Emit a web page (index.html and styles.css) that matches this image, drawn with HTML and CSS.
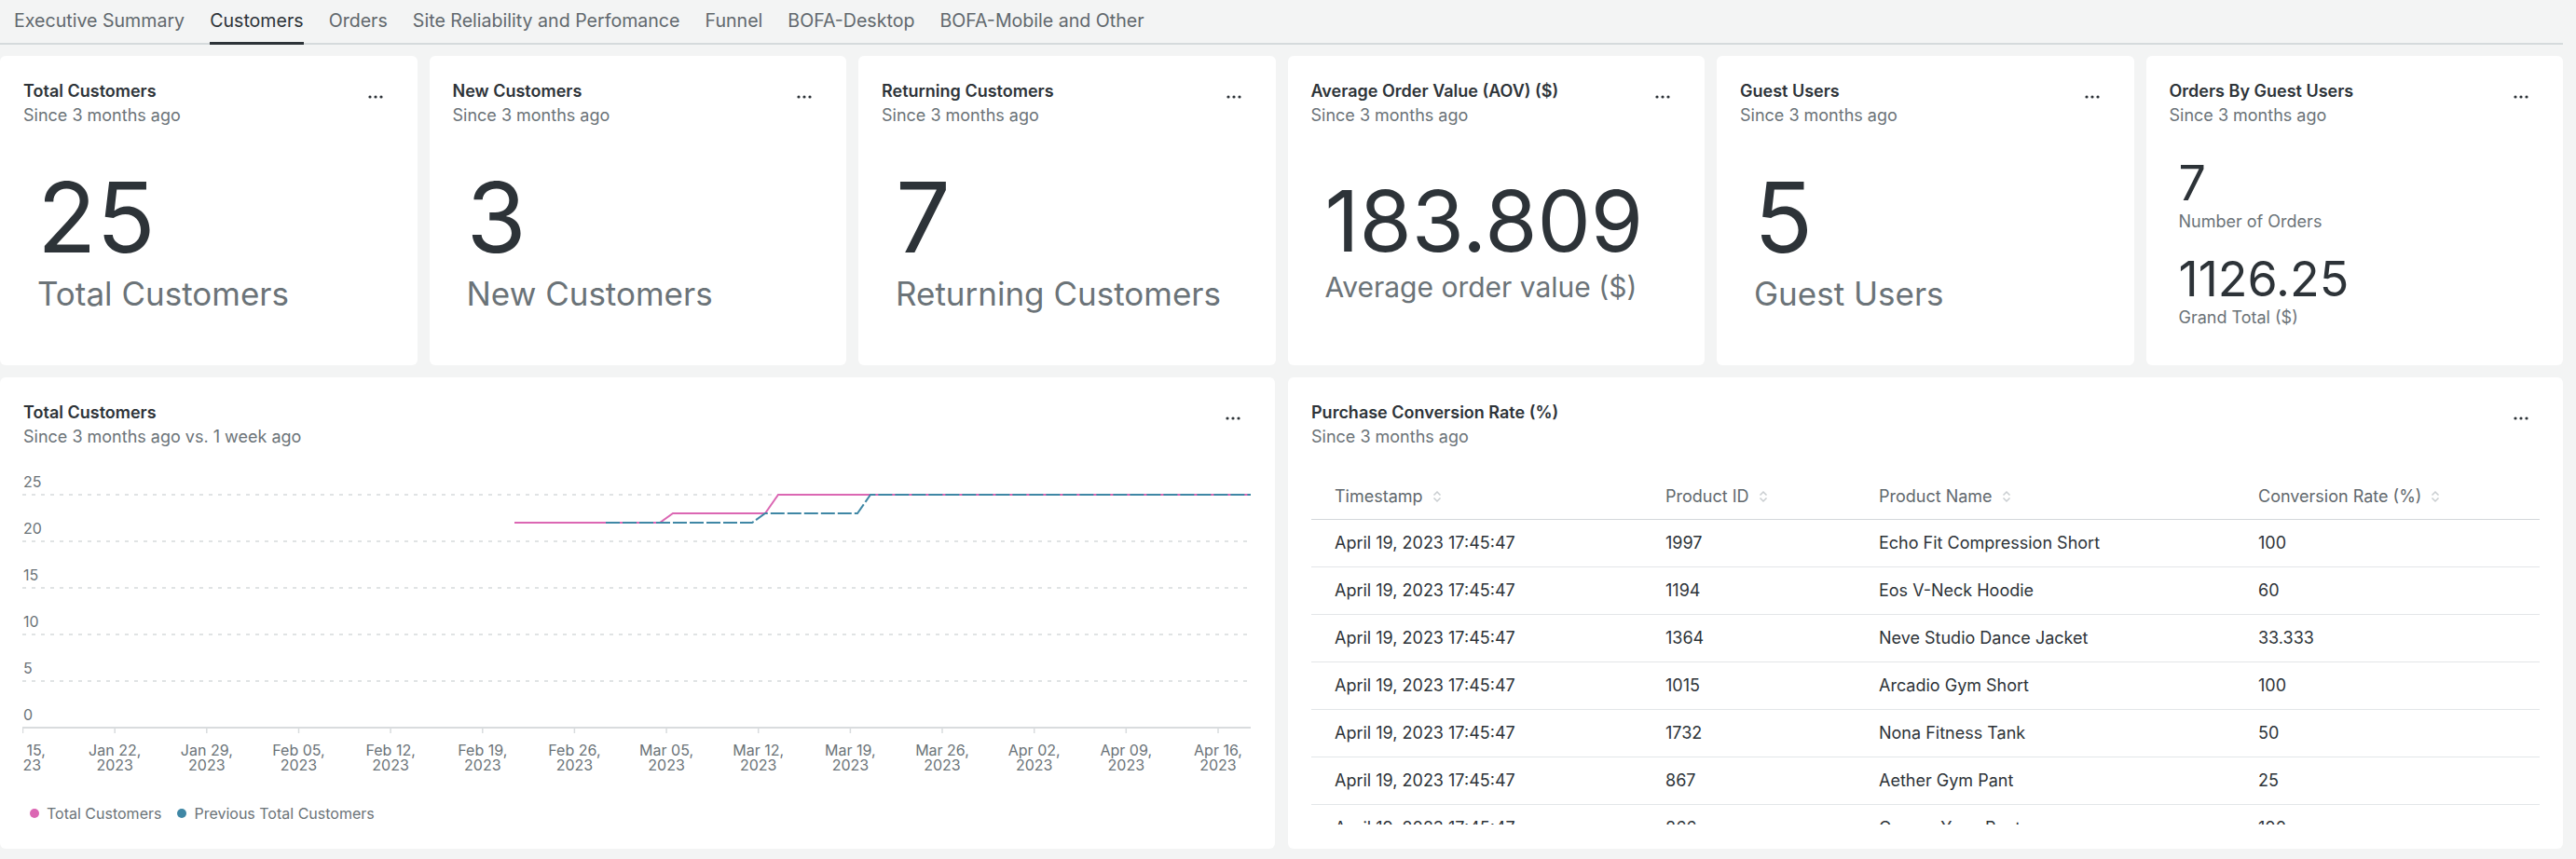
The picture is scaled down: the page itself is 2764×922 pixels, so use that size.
FILE: index.html
```html
<!DOCTYPE html>
<html lang="en">
<head>
<meta charset="utf-8">
<title>Customers</title>
<link rel="stylesheet" href="styles.css">
</head>
<body>
<div class="page">
  <nav class="tabs">
    <div class="tab">Executive Summary</div>
    <div class="tab active">Customers</div>
    <div class="tab">Orders</div>
    <div class="tab">Site Reliability and Perfomance</div>
    <div class="tab">Funnel</div>
    <div class="tab">BOFA-Desktop</div>
    <div class="tab">BOFA-Mobile and Other</div>
  </nav>

  <section class="row-top">
    <div class="card stat">
      <div class="card-head">
        <div><div class="card-title">Total Customers</div><div class="card-sub">Since 3 months ago</div></div>
        <svg class="more" width="16" height="4" viewBox="0 0 16 4"><circle cx="2" cy="2" r="1.6"/><circle cx="8" cy="2" r="1.6"/><circle cx="14" cy="2" r="1.6"/></svg>
      </div>
      <div class="stat-body"><div class="stat-value">25</div><div class="stat-label">Total Customers</div></div>
    </div>
    <div class="card stat">
      <div class="card-head">
        <div><div class="card-title">New Customers</div><div class="card-sub">Since 3 months ago</div></div>
        <svg class="more" width="16" height="4" viewBox="0 0 16 4"><circle cx="2" cy="2" r="1.6"/><circle cx="8" cy="2" r="1.6"/><circle cx="14" cy="2" r="1.6"/></svg>
      </div>
      <div class="stat-body"><div class="stat-value">3</div><div class="stat-label">New Customers</div></div>
    </div>
    <div class="card stat">
      <div class="card-head">
        <div><div class="card-title">Returning Customers</div><div class="card-sub">Since 3 months ago</div></div>
        <svg class="more" width="16" height="4" viewBox="0 0 16 4"><circle cx="2" cy="2" r="1.6"/><circle cx="8" cy="2" r="1.6"/><circle cx="14" cy="2" r="1.6"/></svg>
      </div>
      <div class="stat-body"><div class="stat-value">7</div><div class="stat-label">Returning Customers</div></div>
    </div>
    <div class="card stat">
      <div class="card-head">
        <div><div class="card-title">Average Order Value (AOV) ($)</div><div class="card-sub">Since 3 months ago</div></div>
        <svg class="more" width="16" height="4" viewBox="0 0 16 4"><circle cx="2" cy="2" r="1.6"/><circle cx="8" cy="2" r="1.6"/><circle cx="14" cy="2" r="1.6"/></svg>
      </div>
      <div class="stat-body"><div class="stat-value small">183.809</div><div class="stat-label small">Average order value ($)</div></div>
    </div>
    <div class="card stat">
      <div class="card-head">
        <div><div class="card-title">Guest Users</div><div class="card-sub">Since 3 months ago</div></div>
        <svg class="more" width="16" height="4" viewBox="0 0 16 4"><circle cx="2" cy="2" r="1.6"/><circle cx="8" cy="2" r="1.6"/><circle cx="14" cy="2" r="1.6"/></svg>
      </div>
      <div class="stat-body"><div class="stat-value">5</div><div class="stat-label">Guest Users</div></div>
    </div>
    <div class="card stat">
      <div class="card-head">
        <div><div class="card-title">Orders By Guest Users</div><div class="card-sub">Since 3 months ago</div></div>
        <svg class="more" width="16" height="4" viewBox="0 0 16 4"><circle cx="2" cy="2" r="1.6"/><circle cx="8" cy="2" r="1.6"/><circle cx="14" cy="2" r="1.6"/></svg>
      </div>
      <div class="stat-body multi">
        <div class="mini-value">7</div><div class="mini-label">Number of Orders</div>
        <div class="mini-value second">1126.25</div><div class="mini-label">Grand Total ($)</div>
      </div>
    </div>
  </section>

  <section class="row-bottom">
    <div class="card panel">
      <div class="card-head">
        <div><div class="card-title">Total Customers</div><div class="card-sub">Since 3 months ago vs. 1 week ago</div></div>
        <svg class="more" width="16" height="4" viewBox="0 0 16 4"><circle cx="2" cy="2" r="1.6"/><circle cx="8" cy="2" r="1.6"/><circle cx="14" cy="2" r="1.6"/></svg>
      </div>
      <svg class="chart" width="1318" height="335" viewBox="0 0 1318 335">
        <g class="grid">
          <line x1="0" y1="31" x2="1318" y2="31"/>
          <line x1="0" y1="81" x2="1318" y2="81"/>
          <line x1="0" y1="131" x2="1318" y2="131"/>
          <line x1="0" y1="181" x2="1318" y2="181"/>
          <line x1="0" y1="231" x2="1318" y2="231"/>
        </g>
        <g class="ylab">
          <text x="1" y="22.5">25</text>
          <text x="1" y="72.5">20</text>
          <text x="1" y="122.5">15</text>
          <text x="1" y="172.5">10</text>
          <text x="1" y="222.5">5</text>
          <text x="1" y="272.5">0</text>
        </g>
        <line class="axis" x1="0" y1="281" x2="1318" y2="281"/>
        <g class="ticks">
          <line x1="0.5" y1="282" x2="0.5" y2="287"/>
          <line x1="99.2" y1="282" x2="99.2" y2="287"/>
          <line x1="197.8" y1="282" x2="197.8" y2="287"/>
          <line x1="296.5" y1="282" x2="296.5" y2="287"/>
          <line x1="395.1" y1="282" x2="395.1" y2="287"/>
          <line x1="493.8" y1="282" x2="493.8" y2="287"/>
          <line x1="592.4" y1="282" x2="592.4" y2="287"/>
          <line x1="691.1" y1="282" x2="691.1" y2="287"/>
          <line x1="789.7" y1="282" x2="789.7" y2="287"/>
          <line x1="888.4" y1="282" x2="888.4" y2="287"/>
          <line x1="987" y1="282" x2="987" y2="287"/>
          <line x1="1085.7" y1="282" x2="1085.7" y2="287"/>
          <line x1="1184.3" y1="282" x2="1184.3" y2="287"/>
          <line x1="1283" y1="282" x2="1283" y2="287"/>
        </g>
        <g class="xlab">
          <text class="edge" x="4.5" y="311">15,</text><text class="edge" x="0.5" y="327">23</text>
          <text x="99.2" y="311">Jan 22,</text><text x="99.2" y="327">2023</text>
          <text x="197.8" y="311">Jan 29,</text><text x="197.8" y="327">2023</text>
          <text x="296.5" y="311">Feb 05,</text><text x="296.5" y="327">2023</text>
          <text x="395.1" y="311">Feb 12,</text><text x="395.1" y="327">2023</text>
          <text x="493.8" y="311">Feb 19,</text><text x="493.8" y="327">2023</text>
          <text x="592.4" y="311">Feb 26,</text><text x="592.4" y="327">2023</text>
          <text x="691.1" y="311">Mar 05,</text><text x="691.1" y="327">2023</text>
          <text x="789.7" y="311">Mar 12,</text><text x="789.7" y="327">2023</text>
          <text x="888.4" y="311">Mar 19,</text><text x="888.4" y="327">2023</text>
          <text x="987" y="311">Mar 26,</text><text x="987" y="327">2023</text>
          <text x="1085.7" y="311">Apr 02,</text><text x="1085.7" y="327">2023</text>
          <text x="1184.3" y="311">Apr 09,</text><text x="1184.3" y="327">2023</text>
          <text x="1283" y="311">Apr 16,</text><text x="1283" y="327">2023</text>
        </g>
        <path class="line-current" d="M528 61 H684 L698 51 H797 L811 31 H1318"/>
        <path class="line-previous" d="M626 61 H783 L797 51 H896 L910 31 H1318"/>
      </svg>
      <div class="legend">
        <div class="legend-item"><span class="swatch pink"></span>Total Customers</div>
        <div class="legend-item"><span class="swatch blue"></span>Previous Total Customers</div>
      </div>
    </div>

    <div class="card panel">
      <div class="card-head">
        <div><div class="card-title">Purchase Conversion Rate (%)</div><div class="card-sub">Since 3 months ago</div></div>
        <svg class="more" width="16" height="4" viewBox="0 0 16 4"><circle cx="2" cy="2" r="1.6"/><circle cx="8" cy="2" r="1.6"/><circle cx="14" cy="2" r="1.6"/></svg>
      </div>
      <div class="table-wrap">
        <table class="data">
          <colgroup><col class="c1"><col class="c2"><col class="c3"><col class="c4"></colgroup>
          <thead>
            <tr>
              <th>Timestamp<svg class="sort" width="10" height="16" viewBox="0 0 10 16"><path d="M1.5 6.5 L5 3 L8.5 6.5 M1.5 9.5 L5 13 L8.5 9.5"/></svg></th>
              <th>Product ID<svg class="sort" width="10" height="16" viewBox="0 0 10 16"><path d="M1.5 6.5 L5 3 L8.5 6.5 M1.5 9.5 L5 13 L8.5 9.5"/></svg></th>
              <th>Product Name<svg class="sort" width="10" height="16" viewBox="0 0 10 16"><path d="M1.5 6.5 L5 3 L8.5 6.5 M1.5 9.5 L5 13 L8.5 9.5"/></svg></th>
              <th>Conversion Rate (%)<svg class="sort" width="10" height="16" viewBox="0 0 10 16"><path d="M1.5 6.5 L5 3 L8.5 6.5 M1.5 9.5 L5 13 L8.5 9.5"/></svg></th>
            </tr>
          </thead>
          <tbody>
            <tr><td>April 19, 2023 17:45:47</td><td>1997</td><td>Echo Fit Compression Short</td><td>100</td></tr>
            <tr><td>April 19, 2023 17:45:47</td><td>1194</td><td>Eos V-Neck Hoodie</td><td>60</td></tr>
            <tr><td>April 19, 2023 17:45:47</td><td>1364</td><td>Neve Studio Dance Jacket</td><td>33.333</td></tr>
            <tr><td>April 19, 2023 17:45:47</td><td>1015</td><td>Arcadio Gym Short</td><td>100</td></tr>
            <tr><td>April 19, 2023 17:45:47</td><td>1732</td><td>Nona Fitness Tank</td><td>50</td></tr>
            <tr><td>April 19, 2023 17:45:47</td><td>867</td><td>Aether Gym Pant</td><td>25</td></tr>
            <tr><td>April 19, 2023 17:45:47</td><td>866</td><td>Cronus Yoga Pant</td><td>100</td></tr>
          </tbody>
        </table>
      </div>
    </div>
  </section>
</div>
</body>
</html>
```

FILE: styles.css
```css
* { box-sizing: border-box; }

html, body {
  margin: 0;
  padding: 0;
  background: #f3f4f4;
}

body {
  font-family: Inter, "Noto Sans", "Liberation Sans", sans-serif;
  color: #2d3338;
  width: 2764px;
  height: 922px;
  overflow: hidden;
}

.page {
  padding-right: 14px;
}

/* Tabs */
.tabs {
  display: flex;
  gap: 27px;
  padding-left: 15px;
  height: 48px;
  border-bottom: 2px solid #d5dadc;
}

.tab {
  font-size: 19.6px;
  line-height: 45px;
  height: 48px;
  color: #61686d;
  border-bottom: 3px solid transparent;
  margin-bottom: -2px;
  white-space: nowrap;
}

.tab.active {
  color: #2d3338;
  border-bottom-color: #2d3338;
}

/* Rows */
.row-top {
  display: grid;
  grid-template-columns: repeat(6, 1fr);
  gap: 13px;
  height: 332px;
  margin-top: 12px;
}

.row-bottom {
  display: grid;
  grid-template-columns: 1fr 1fr;
  gap: 14px;
  height: 506px;
  margin-top: 13px;
}

.card {
  background: #ffffff;
  border-radius: 6px;
  display: flex;
  flex-direction: column;
  min-width: 0;
}

.card-head {
  display: flex;
  justify-content: space-between;
  align-items: flex-start;
}

.card-title {
  font-size: 18px;
  font-weight: 600;
  line-height: 26px;
  color: #2d3338;
  white-space: nowrap;
}

.card-sub {
  font-size: 18px;
  line-height: 26px;
  color: #6b7378;
  white-space: nowrap;
}

.more {
  fill: #2d3338;
  margin-top: 17px;
  margin-right: 12px;
  flex: none;
}

/* Stat cards */
.stat {
  padding: 25px 25px 12px 25px;
}

.stat-body {
  flex: 1;
  display: flex;
  flex-direction: column;
  justify-content: center;
  padding-left: 15px;
}

.stat-value {
  font-size: 104px;
  line-height: 104px;
  color: #2d3338;
  white-space: nowrap;
}

.stat-label {
  font-size: 35px;
  line-height: 42px;
  margin-top: 9px;
  color: #6b7378;
  white-space: nowrap;
}

.stat-value.small {
  font-size: 91px;
  line-height: 91px;
}

.stat-label.small {
  font-size: 30px;
  line-height: 36px;
  margin-top: 7px;
}

.stat-body.multi {
  padding-left: 10px;
  padding-top: 6px;
}

.mini-value {
  font-size: 52px;
  line-height: 52px;
  color: #2d3338;
}

.mini-value.second {
  margin-top: 24px;
}

.mini-label {
  font-size: 18px;
  line-height: 24px;
  margin-top: 3px;
  color: #6b7378;
}

/* Panels */
.panel {
  padding: 25px;
}

.chart {
  display: block;
  margin-top: 18px;
  margin-left: -1px;
  font-family: Inter, "Noto Sans", sans-serif;
}

.grid line {
  stroke: #d6dadc;
  stroke-width: 1.5;
  stroke-dasharray: 4 6;
}

.axis {
  stroke: #d9dcde;
  stroke-width: 2;
}

.ticks line {
  stroke: #d9dcde;
  stroke-width: 1.5;
}

.ylab text {
  font-size: 16px;
  fill: #6b7378;
}

.xlab text {
  font-size: 16px;
  fill: #6b7378;
  text-anchor: middle;
}

.xlab text.edge {
  text-anchor: start;
}

.line-current {
  fill: none;
  stroke: #db67b3;
  stroke-width: 2;
}

.line-previous {
  fill: none;
  stroke: #3f87a5;
  stroke-width: 2;
  stroke-dasharray: 15 3;
}

.legend {
  display: flex;
  align-items: center;
  margin-top: 28px;
  padding-left: 7px;
  font-size: 16px;
  line-height: 20px;
  color: #6b7378;
}

.legend-item {
  display: flex;
  align-items: center;
  gap: 8px;
  margin-right: 17px;
}

.swatch {
  width: 10px;
  height: 10px;
  border-radius: 50%;
}

.swatch.pink { background: #db67b3; }
.swatch.blue { background: #3f87a5; }

/* Table */
.table-wrap {
  margin-top: 26px;
  height: 377px;
  overflow: hidden;
}

.data {
  width: 100%;
  border-collapse: separate;
  border-spacing: 0;
  table-layout: fixed;
  font-size: 18px;
}

.c1 { width: 355px; }
.c2 { width: 229px; }
.c3 { width: 407px; }
.c4 { width: 327px; }

.data th {
  text-align: left;
  font-weight: 400;
  color: #61686d;
  line-height: 49px;
  padding: 0 0 0 25px;
  border-bottom: 1px solid #d3d7da;
  white-space: nowrap;
}

.data td {
  line-height: 50px;
  padding: 0 0 0 25px;
  border-bottom: 1px solid #e3e6e8;
  color: #2d3338;
  white-space: nowrap;
}

.sort {
  fill: none;
  stroke: #c9cdd0;
  stroke-width: 1.5;
  vertical-align: -2px;
  margin-left: 10px;
}
```
